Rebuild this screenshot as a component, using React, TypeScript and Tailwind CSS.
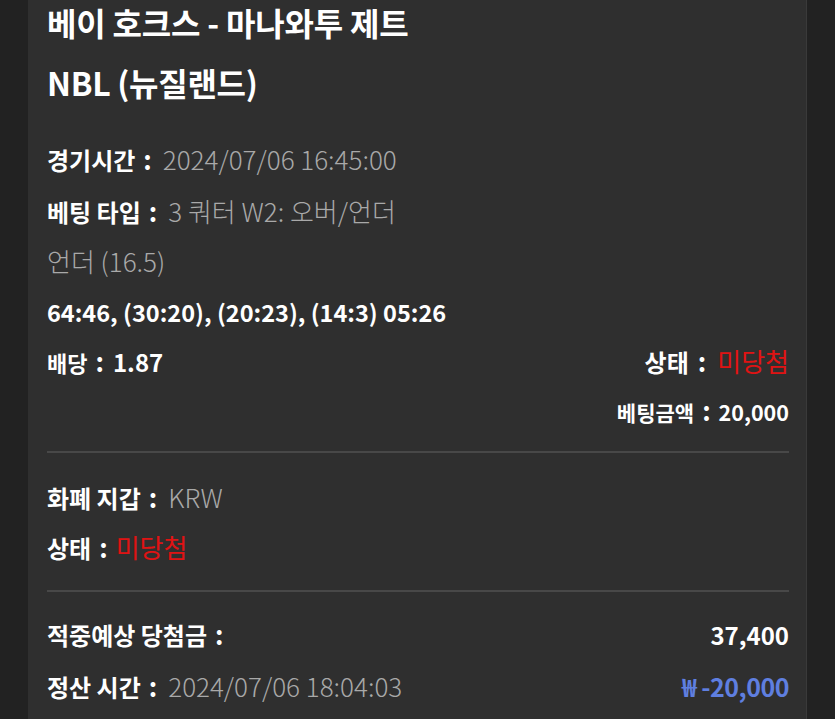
import type { FC, ReactNode } from 'react';

const font = { fontFamily: '"Noto Sans CJK KR", "Noto Sans", sans-serif' };

const Row: FC<{ children: ReactNode; className?: string }> = ({ children, className }) => (
  <div className={['text-[24px] whitespace-nowrap', className ?? 'leading-[50px]'].join(' ')}>{children}</div>
);

const Label: FC<{ children: ReactNode; className?: string }> = ({ children, className }) => (
  <span className={['font-bold leading-none text-white', className ?? 'text-[24px]'].join(' ')}>{children}</span>
);

const Colon: FC<{ className?: string }> = ({ className }) => (
  <span className={['text-[26px] font-bold leading-none text-white', className ?? 'mr-[11px] ml-[8px]'].join(' ')}>:</span>
);

const Value: FC<{ children: ReactNode; className?: string }> = ({ children, className }) => (
  <span className={['leading-none', className ?? 'text-[26px] font-light text-[#a9a9a9]'].join(' ')}>{children}</span>
);

const Divider = () => <div className="h-[2px] bg-[#484848]" />;

export default function App() {
  return (
    <div className="min-h-[719px] bg-[#222222] pl-[28px] pr-[28px]" style={font}>
      <div className="min-h-[719px] border-r border-[#3a3a3a] bg-[#2f2f2f] pl-[19px] pr-[17px] pb-4">
        <h1 className="text-[32px] font-bold leading-[44px] tracking-[-0.2px] text-white">
          베이 호크스 - 마나와투 제트
        </h1>
        <h2 className="mt-[16px] text-[32px] font-bold leading-[44px] tracking-[-0.3px] text-white">
          NBL (뉴질랜드)
        </h2>

        <div className="mt-[31px] flex flex-col">
          <Row>
            <Label>경기시간</Label>
            <Colon />
            <Value>2024/07/06 16:45:00</Value>
          </Row>
          <Row className="mt-[2px] leading-[50px]">
            <Label>베팅 타입</Label>
            <Colon />
            <Value>3 쿼터 W2: 오버/언더</Value>
          </Row>
          <Row>
            <Value>언더 (16.5)</Value>
          </Row>
          <Row>
            <span className="text-[23.5px] font-bold leading-none text-white">
              64:46, (30:20), (20:23), (14:3) 05:26
            </span>
          </Row>
          <Row className="flex justify-between leading-[50px]">
            <div>
              <Label className="text-[22px]">배당</Label>
              <Colon className="mr-[9px] ml-[8px]" />
              <Value className="text-[24px] font-bold text-white">1.87</Value>
            </div>
            <div>
              <Label>상태</Label>
              <Colon className="mr-[11px] ml-[9px]" />
              <Value className="text-[26px] font-normal text-[#e01313]">미당첨</Value>
            </div>
          </Row>
          <Row className="text-right leading-[48px]">
            <Label className="text-[21px]">베팅금액</Label>
            <Colon className="mr-[8px] ml-[8px]" />
            <Value className="text-[21.5px] font-bold text-white">20,000</Value>
          </Row>
        </div>

        <div className="mt-[16px]">
          <Divider />
        </div>

        <div className="mt-[20px] flex flex-col">
          <Row>
            <Label>화폐 지갑</Label>
            <Colon />
            <Value>KRW</Value>
          </Row>
          <Row>
            <Label>상태</Label>
            <Colon className="mr-[8px] ml-[8px]" />
            <Value className="text-[26px] font-normal text-[#e01313]">미당첨</Value>
          </Row>
        </div>

        <div className="mt-[17px]">
          <Divider />
        </div>

        <div className="mt-[18px] flex flex-col">
          <Row className="flex justify-between leading-[50px]">
            <div>
              <Label>적중예상 당첨금</Label>
              <Colon />
            </div>
            <div>
              <Value className="text-[24px] font-bold text-white">37,400</Value>
            </div>
          </Row>
          <Row className="mt-[2px] flex justify-between leading-[50px]">
            <div>
              <Label>정산 시간</Label>
              <Colon />
              <Value>2024/07/06 18:04:03</Value>
            </div>
            <div>
              <Value className="text-[25px] font-bold tracking-[-0.5px] text-[#5f7fe0]">₩ -20,000</Value>
            </div>
          </Row>
        </div>
      </div>
    </div>
  );
}
